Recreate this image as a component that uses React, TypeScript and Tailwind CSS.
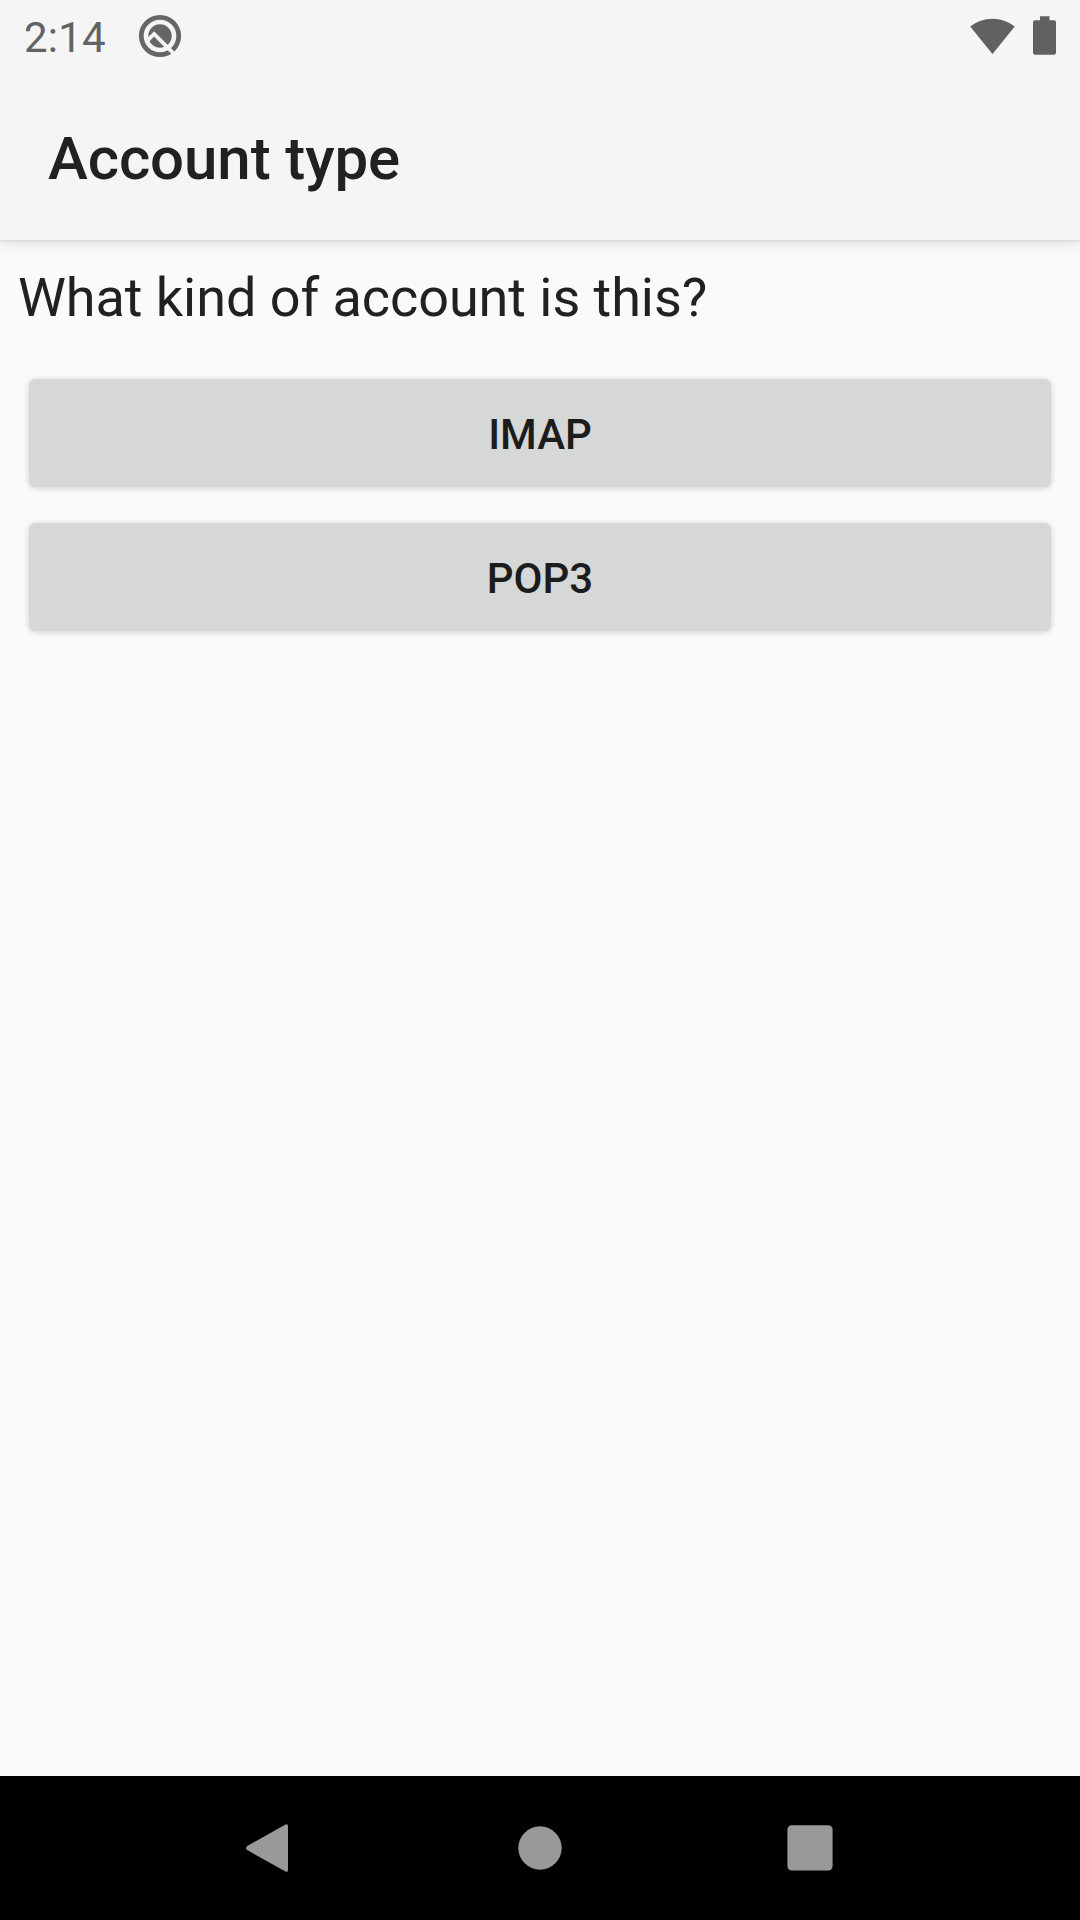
import React from "react";

function AndroidQIcon() {
  return (
    <svg width="44" height="44" viewBox="0 0 44 44" fill="none">
      <circle cx="22" cy="22" r="18.7" stroke="#666666" strokeWidth="4.7" />
      <circle cx="22" cy="22" r="11.7" fill="#666666" />
      <path d="M9.500 26.500 L16.100 19.900 L37 40.800" stroke="#f5f5f5" strokeWidth="3.8" />
    </svg>
  );
}

function StatusBar() {
  return (
    <div className="flex h-[72px] items-start pl-6 pr-[23px] text-[#636363]">
      <span className="text-[42px] leading-[76px] tracking-[0.2px]">2:14</span>
      <div className="ml-8 mt-[13.5px] h-[44px]"><AndroidQIcon /></div>
      <div className="ml-auto mt-4 flex items-start">
        <svg width="46" height="39" viewBox="0 0 46 39">
          <path d="M0.2 10.6 A36 36 0 0 1 44.8 10.6 L22.5 38 Z" fill="#616161" />
        </svg>
        <svg width="24" height="39" viewBox="0 0 24 39" className="ml-[17px]">
          <path d="M7 0.300 h9.500 v4 h4.500 a2 2 0 0 1 2 2 v30.400 a2 2 0 0 1 -2 2 h-19 a2 2 0 0 1 -2 -2 v-30.400 a2 2 0 0 1 2 -2 h5 z" fill="#616161" />
        </svg>
      </div>
    </div>
  );
}

function TypeButton({ label }: { label: string }) {
  return (
    <button className="flex h-[108px] w-full items-center justify-center rounded-[6px] bg-[#d6d8d7] pt-1 text-[42px] font-medium leading-none text-[#1c1c1c] shadow-[0_1px_6px_rgba(0,0,0,0.18)]">
      {label}
    </button>
  );
}

export default function App() {
  return (
    <div className="flex h-[1920px] w-[1080px] flex-col overflow-hidden bg-[#fafafa] font-[Roboto,sans-serif] text-[#212121]">
      <header className="relative h-[240px] shrink-0 bg-[#f5f5f5] shadow-[0_3px_14px_rgba(0,0,0,0.11),0_2px_2px_rgba(0,0,0,0.06)]">
        <StatusBar />
        <h1 className="pl-12 pt-[52px] text-[60px] font-medium leading-[70px] tracking-[-0.1px]">Account type</h1>
      </header>
      <main className="flex-1">
        <p className="pl-[18px] pt-[26px] text-[54px] leading-[64px] tracking-[-0.06px]">What kind of account is this?</p>
        <div className="mt-[49px] flex flex-col gap-9 pl-[29px] pr-[29px]">
          <TypeButton label="IMAP" />
          <TypeButton label="POP3" />
        </div>
      </main>
      <nav className="flex h-36 items-center justify-center bg-black text-[#999999]">
        <svg width="270" height="144" viewBox="0 0 270 144" fill="currentColor">
          <path d="M150.500 48.600 Q153 47.200 153 50.500 V93.500 Q153 96.800 150.500 95.600 L112.600 74.300 Q109.400 72 112.600 69.700 Z" />
        </svg>
        <svg width="270" height="144" viewBox="0 0 270 144" fill="currentColor">
          <circle cx="135" cy="72" r="21.700" />
        </svg>
        <svg width="270" height="144" viewBox="0 0 270 144" fill="currentColor">
          <rect x="112.400" y="49.300" width="45.200" height="45.200" rx="4.500" />
        </svg>
      </nav>
    </div>
  );
}
